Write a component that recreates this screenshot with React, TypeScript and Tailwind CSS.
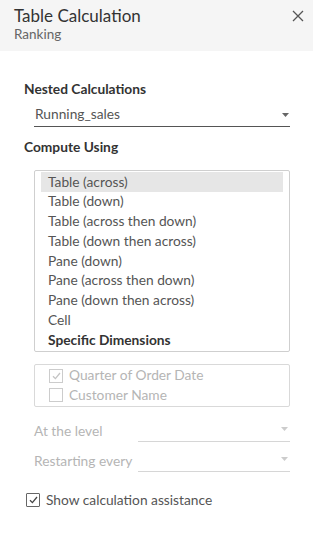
import { useState } from 'react'

const options = [
  'Table (across)',
  'Table (down)',
  'Table (across then down)',
  'Table (down then across)',
  'Pane (down)',
  'Pane (across then down)',
  'Pane (down then across)',
  'Cell',
]

function Caret({ light }: { light?: boolean }) {
  return (
    <svg width="7" height="4" viewBox="0 0 7 4" className="shrink-0">
      <path d="M0 0h7L3.5 4z" fill={light ? '#cccccc' : '#666666'} />
    </svg>
  )
}

function Check({ color }: { color: string }) {
  return (
    <svg width="9" height="8" viewBox="0 0 9 8">
      <path d="M1 4.2l2.4 2.4L8 1" fill="none" stroke={color} strokeWidth="1.3" />
    </svg>
  )
}

export default function App() {
  const [selected, setSelected] = useState(0)
  const [assist, setAssist] = useState(true)

  return (
    <div className="w-[313px] h-[535px] bg-white text-[#333] font-['Lato',sans-serif] overflow-hidden">
      <div className="h-[51px] bg-[#f5f5f5] pl-[14px] pr-[9px] pt-[5px] flex justify-between">
        <div>
          <div className="text-[17px] leading-[21px] text-[#333]">Table Calculation</div>
          <div className="text-[13.5px] leading-[17px] text-[#666]">Ranking</div>
        </div>
        <svg width="12" height="12" viewBox="0 0 12 12" className="mt-[5px]">
          <path d="M1 1l10 10M11 1L1 11" stroke="#555" strokeWidth="1.3" />
        </svg>
      </div>

      <div className="pl-[24px] pr-[23px]">
        <div className="mt-[29px] text-[13.75px] leading-[17px] font-bold text-[#333]">Nested Calculations</div>

        <div className="ml-[10px] mt-[6px] h-[24px] border-b border-[#555] flex items-center justify-between pl-[1px] pr-[1px]">
          <span className="text-[13.75px] text-[#555]">Running_sales</span>
          <Caret />
        </div>

        <div className="mt-[11px] text-[13.75px] leading-[17px] font-bold text-[#333]">Compute Using</div>

        <div className="ml-[10px] mt-[15px] border border-[#cfcfcf] rounded-[2px] px-[6px] pt-[1px] pb-[1px]">
          {options.map((o, i) => (
            <div
              key={o}
              onClick={() => setSelected(i)}
              className={`h-[19.75px] pl-[7px] flex items-center text-[13.75px] text-[#555] ${selected === i ? 'bg-[#e6e6e6]' : ''}`}
            >
              {o}
            </div>
          ))}
          <div className="h-[19.75px] pl-[7px] flex items-center text-[13.75px] font-bold text-[#333]">Specific Dimensions</div>
        </div>

        <div className="ml-[10px] mt-[12px] border border-[#d9d9d9] rounded-[2px] pl-[14px] py-[1px]">
          <div className="h-[19.5px] flex items-center gap-[6px] text-[13.75px] text-[#b5b5b5]">
            <span className="w-[14px] h-[14px] border border-[#cccccc] flex items-center justify-center">
              <Check color="#c4c4c4" />
            </span>
            Quarter of Order Date
          </div>
          <div className="h-[19.5px] flex items-center gap-[6px] text-[13.75px] text-[#b5b5b5]">
            <span className="w-[14px] h-[14px] border border-[#cccccc]" />
            Customer Name
          </div>
        </div>

        <div className="ml-[10px] mt-[11px] flex items-end">
          <span className="w-[104px] text-[13.75px] leading-[22px] text-[#b5b5b5]">At the level</span>
          <div className="flex-1 h-[24px] border-b border-[#d6d6d6] flex items-center justify-end pr-[2px]">
            <Caret light />
          </div>
        </div>
        <div className="ml-[10px] mt-[6px] flex items-end">
          <span className="w-[104px] text-[13.75px] leading-[22px] text-[#b5b5b5]">Restarting every</span>
          <div className="flex-1 h-[24px] border-b border-[#d6d6d6] flex items-center justify-end pr-[2px]">
            <Caret light />
          </div>
        </div>

        <div className="mt-[18px] flex items-center gap-[6px] ml-[2px] cursor-pointer" onClick={() => setAssist(!assist)}>
          <span className="w-[14px] h-[14px] border border-[#666] rounded-[1px] flex items-center justify-center">
            {assist && <Check color="#444" />}
          </span>
          <span className="text-[13.75px] text-[#555]">Show calculation assistance</span>
        </div>
      </div>
    </div>
  )
}
